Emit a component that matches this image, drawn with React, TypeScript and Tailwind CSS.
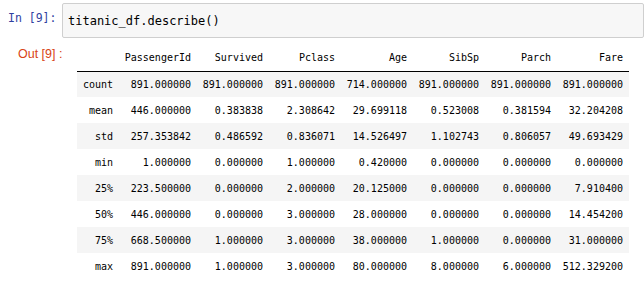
const cols = ['PassengerId', 'Survived', 'Pclass', 'Age', 'SibSp', 'Parch', 'Fare']

const rows: [string, string[]][] = [
  ['count', ['891.000000', '891.000000', '891.000000', '714.000000', '891.000000', '891.000000', '891.000000']],
  ['mean', ['446.000000', '0.383838', '2.308642', '29.699118', '0.523008', '0.381594', '32.204208']],
  ['std', ['257.353842', '0.486592', '0.836071', '14.526497', '1.102743', '0.806057', '49.693429']],
  ['min', ['1.000000', '0.000000', '1.000000', '0.420000', '0.000000', '0.000000', '0.000000']],
  ['25%', ['223.500000', '0.000000', '2.000000', '20.125000', '0.000000', '0.000000', '7.910400']],
  ['50%', ['446.000000', '0.000000', '3.000000', '28.000000', '0.000000', '0.000000', '14.454200']],
  ['75%', ['668.500000', '1.000000', '3.000000', '38.000000', '1.000000', '0.000000', '31.000000']],
  ['max', ['891.000000', '1.000000', '3.000000', '80.000000', '8.000000', '6.000000', '512.329200']],
]

const mono = "font-['DejaVu_Sans_Mono',monospace]"

export default function App() {
  return (
    <div className="h-[293px] w-[644px] overflow-hidden bg-white">
      {/* input cell */}
      <div className="flex pt-[3px]">
        <div className={`w-[62px] pl-[8px] pt-[7px] text-[11.5px] leading-[16px] text-[#303f9f] ${mono}`}>
          In&nbsp;[9]:
        </div>
        <div className="h-[35px] flex-1 rounded-[2px] border border-[#cfcfcf] bg-[#f7f7f7] pl-[5px]">
          <div className={`pt-[9px] text-[12px] leading-[16px] text-black ${mono}`}>titanic_df.describe()</div>
        </div>
      </div>

      {/* output cell */}
      <div className="flex pt-[7px]">
        <div className="w-[77px] pl-[18px] pt-[1px] font-['Liberation_Sans',sans-serif] text-[12.5px] leading-[16px] text-[#d84315]">
          Out&nbsp;[9]&nbsp;:
        </div>
        <table className={`w-[552px] table-fixed border-collapse text-[10px] text-black ${mono}`}>
          <colgroup>
            <col className="w-[42px]" />
            <col className="w-[78px]" />
            {cols.slice(1).map((c) => (
              <col key={c} className="w-[72px]" />
            ))}
          </colgroup>
          <thead>
            <tr className="h-[26px] border-b border-black">
              <th className="pr-[6px] text-right font-normal"></th>
              {cols.map((c) => (
                <th key={c} className="pr-[6px] text-right font-normal">
                  {c}
                </th>
              ))}
            </tr>
          </thead>
          <tbody>
            {rows.map(([label, vals], r) => (
              <tr key={label} className={`h-[26px] ${r % 2 === 0 ? 'bg-[#f5f5f5]' : 'bg-white'}`}>
                <th className="pr-[6px] text-right font-normal">{label}</th>
                {vals.map((v, i) => (
                  <td key={i} className="pr-[6px] text-right">
                    {v}
                  </td>
                ))}
              </tr>
            ))}
          </tbody>
        </table>
      </div>
    </div>
  )
}
